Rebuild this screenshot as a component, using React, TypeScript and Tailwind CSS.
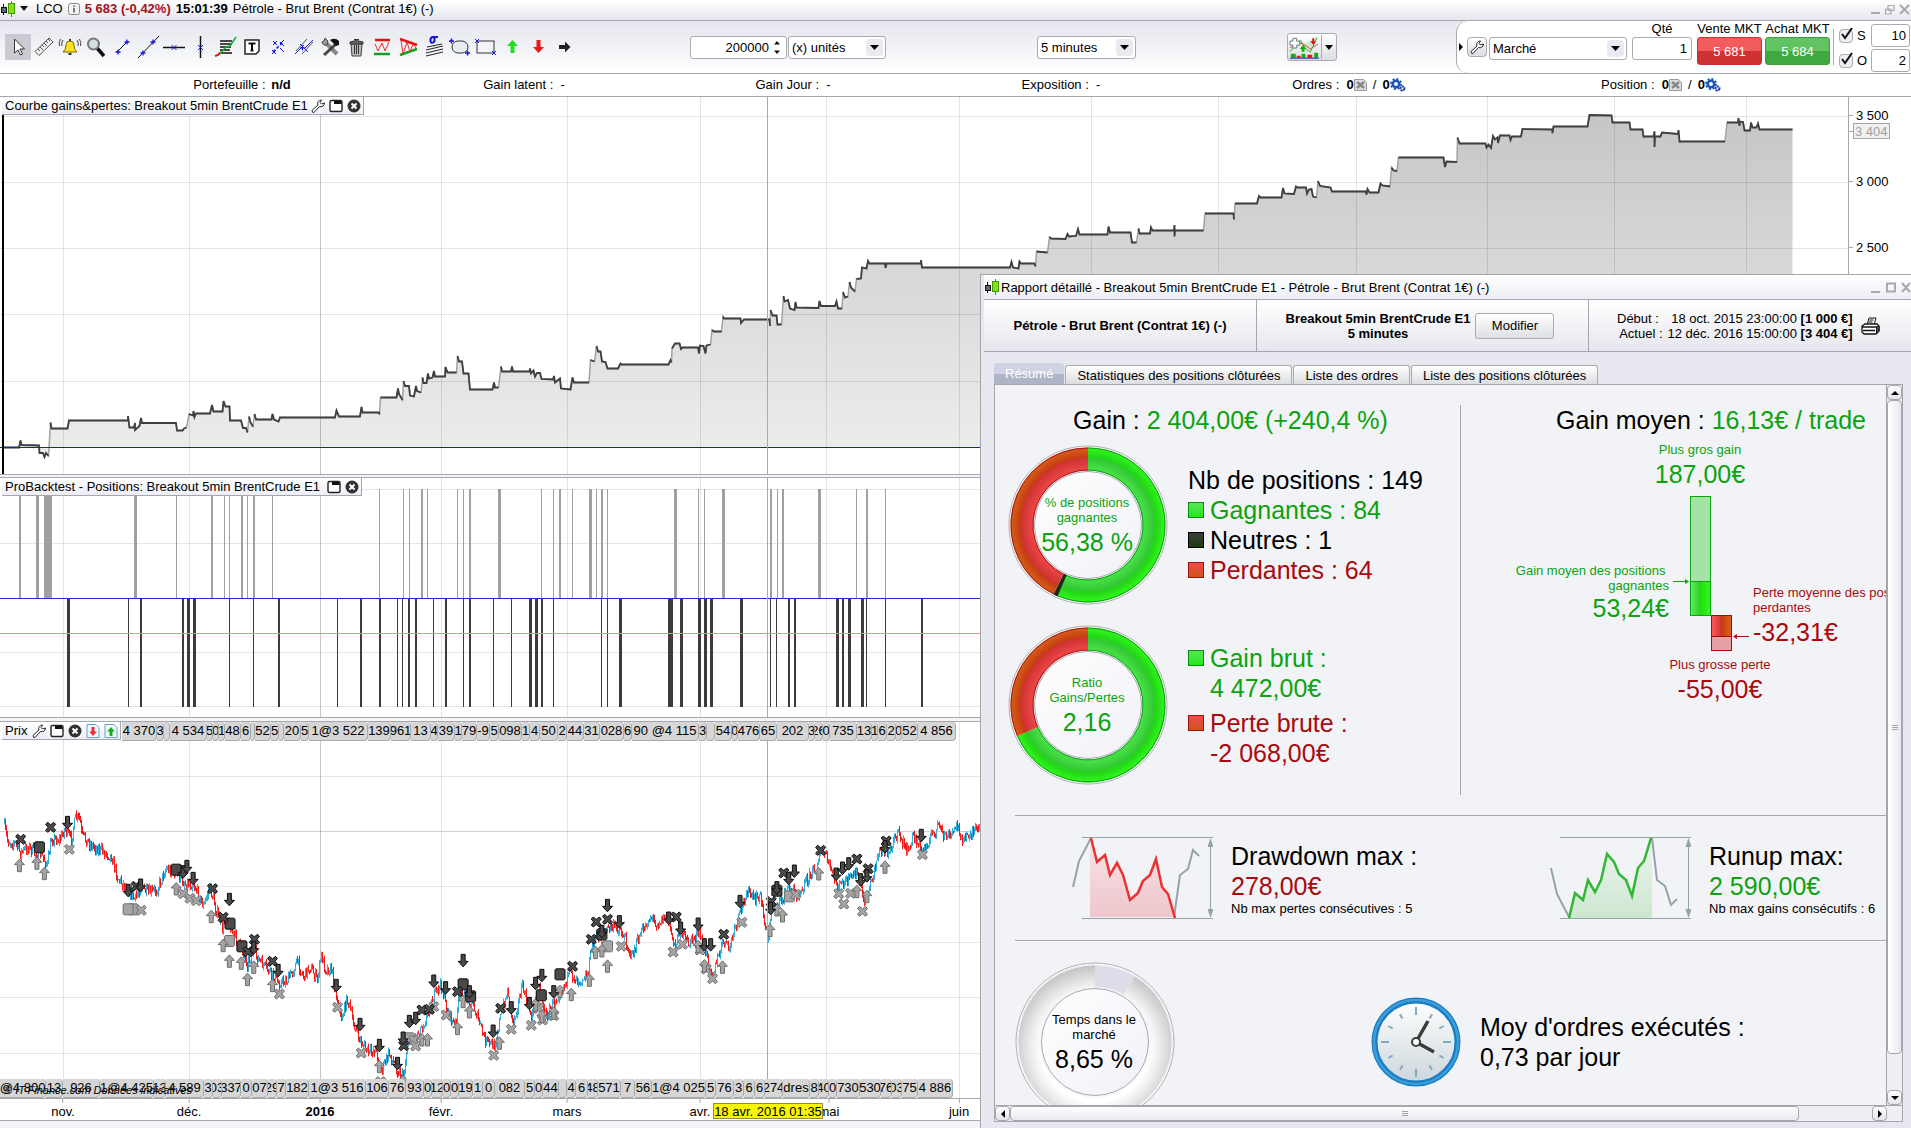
import { ReactNode } from 'react';

type Point = [number, number];
type Bar = [number, number];

const MONTHS_X = [63, 189, 320, 441, 567, 700, 826, 959, 1091, 1218, 1356, 1487, 1614, 1746];
const CURSOR_X = 767;

const EQUITY: Point[] = [
  [2, 447.5], [19, 447.5], [20.5, 440.5], [21.5, 445], [39, 445.5], [39.5, 453], [43, 453], [44.5, 457], [46, 453], [48.5, 456],
  [50.5, 422.5], [51.5, 428.5], [67.5, 428.5], [69, 420.5], [128, 420.5], [128, 416], [129.5, 427.5], [134, 427.5], [135, 423],
  [135, 430], [139.5, 426], [141, 418], [142, 423], [176, 423], [177, 430.5], [182.5, 430.5], [184, 428.5], [186.5, 427.5],
  [189, 414], [193, 415.5], [193.5, 411], [194.5, 417], [196, 413.5], [210, 413.5], [212, 405], [213.5, 411.5], [222.5, 411.5],
  [223.5, 401], [225.5, 406.5], [229.5, 406.5], [230, 420.5], [241, 420.5], [243, 428], [246, 428], [247.5, 432.5], [249, 416.5],
  [250.5, 422.5], [253, 426.5], [254.5, 414], [256, 419.5], [271.5, 419.5], [272.5, 414], [274, 419.5], [278.5, 421.5], [280, 417.5],
  [335, 417.5], [336.5, 410.5], [339, 416.5], [360, 416.5], [361.5, 407], [362.5, 412.5], [379, 412.5], [379.5, 414.5], [380.5, 397.5],
  [396.5, 397.5], [398, 388.5], [399, 394], [402.5, 400], [403.5, 381], [405, 386], [409, 386], [410, 395.5], [414, 396.5], [416, 386],
  [417, 391], [421, 392.5], [422.5, 377.5], [423.5, 383], [426.5, 383], [428, 373.5], [429, 378.5], [432.5, 377.5], [434, 371],
  [435, 376.5], [445, 376.5], [445.5, 367], [447.5, 372.5], [456.5, 372.5], [457.5, 356], [459, 361.5], [462, 361.5], [463.5, 373.5],
  [468.5, 373.5], [470, 389.5], [492.5, 389.5], [494, 382.5], [495, 387.5], [498.5, 387.5], [501, 366.5], [502, 371.5], [511, 371.5],
  [512, 366.5], [513, 371.5], [529.5, 371.5], [530, 368.5], [531, 373.5], [533.5, 370.5], [535, 376.5], [537, 373], [540, 373],
  [541.5, 379], [553, 379.5], [554, 376], [555, 382.5], [560, 378.5], [561, 388.5], [570.5, 389.5], [572.5, 377.5], [574, 382.5],
  [589, 382.5], [590.5, 360], [594.5, 361.5], [596.5, 346], [598, 351.5], [600.5, 351.5], [602, 361.5], [605.5, 362], [607.5, 368.5],
  [618, 368.5], [620.5, 363.5], [621.5, 364.5], [668.5, 364.5], [670.5, 360], [671.5, 362.5], [672, 348.5], [675, 343.5],
  [679.5, 343.5], [681, 349], [682.5, 347.5], [698, 347.5], [699, 353.5], [700, 345.5], [703.5, 346], [705.5, 353.5], [706.5, 345.5],
  [710.5, 344.5], [712, 330], [714, 331.5], [721.5, 331.5], [723, 316.5], [724, 318.5], [740.5, 318.5], [741, 323], [744, 319.5],
  [769.5, 319.5], [770, 326], [770.5, 310], [772.5, 315.5], [776.5, 315.5], [777.5, 324.5], [781.5, 324.5], [783.5, 296],
  [784.5, 301.5], [788, 300], [790, 308.5], [794.5, 310], [795.5, 302], [796.5, 307.5], [818.5, 308], [819.5, 301], [821, 306],
  [835, 306], [836.5, 301.5], [838, 308.5], [842, 308.5], [843, 292], [845, 297.5], [848, 296.5], [849.5, 282], [851, 287.5],
  [855, 291.5], [856.5, 279], [861, 278.5], [862, 267.5], [866.5, 268.5], [868, 261], [869.5, 263.5], [885, 263.5], [885.5, 268],
  [886.5, 263.5], [921, 263.5], [921, 260], [922, 267.5], [1010, 267.5], [1011.5, 262], [1013, 267.5], [1018.5, 268.5],
  [1019.5, 261.5], [1021, 263.5], [1034.5, 263.5], [1035.5, 266.5], [1036.5, 251.5], [1047.5, 252.5], [1049.5, 237], [1051, 238.5],
  [1065.5, 239], [1067.5, 234], [1069, 236.5], [1076, 236], [1078, 229], [1079.5, 234.5], [1107.5, 234.5], [1108.5, 226.5],
  [1110, 232.5], [1130.5, 232.5], [1132, 242.5], [1136.5, 242.5], [1138.5, 228.5], [1139.5, 233.5], [1150, 233.5], [1151, 227.5],
  [1152.5, 230.5], [1174, 230.5], [1174.5, 225], [1174.5, 236.5], [1175, 230.5], [1203.5, 230.5], [1205, 213.5], [1233.5, 213.5],
  [1234, 219.5], [1235, 203.5], [1257, 203.5], [1259, 196], [1260.5, 197.5], [1281.5, 197.5], [1283, 188], [1284.5, 193.5],
  [1294, 194], [1296, 186.5], [1297.5, 187.5], [1306, 187.5], [1307, 193.5], [1309, 189.5], [1311.5, 189], [1313, 196.5],
  [1316.5, 197.5], [1318, 181], [1320, 186], [1330.5, 187.5], [1332, 191.5], [1365.5, 191.5], [1366.5, 194.5], [1367.5, 189],
  [1369.5, 192.5], [1378.5, 192.5], [1380.5, 183.5], [1382.5, 185.5], [1390, 186.5], [1391.5, 167.5], [1393.5, 170.5], [1397, 171],
  [1398.5, 157.5], [1443.5, 157.5], [1445, 167], [1446.5, 161.5], [1457, 162], [1457.5, 137.5], [1459.5, 143.5], [1485.5, 143.5],
  [1486.5, 147.5], [1488.5, 144.5], [1491, 148], [1493, 136], [1495, 139.5], [1497.5, 137.5], [1498, 143], [1500, 135.5],
  [1509.5, 135.5], [1510.5, 140], [1512, 136.5], [1521, 136.5], [1522.5, 129], [1552, 129.5], [1552.5, 133], [1553.5, 126.5],
  [1587.5, 126.5], [1589.5, 115], [1611.5, 115.5], [1612.5, 122.5], [1629.5, 122.5], [1630.5, 129.5], [1642.5, 129.5],
  [1643.5, 136.5], [1653.5, 136.5], [1654.5, 131.5], [1654.5, 147], [1655, 136.5], [1660.5, 136.5], [1662, 132.5], [1678, 134],
  [1678.5, 130], [1679.5, 141.5], [1725, 141.5], [1727, 122.5], [1738, 122.5], [1738.5, 118], [1739.5, 126], [1740, 121.5],
  [1743, 122], [1744.5, 130.5], [1750, 130.5], [1751, 122.5], [1752.5, 127.5], [1756.5, 127.5], [1758, 123.5], [1759.5, 129.5],
  [1792.5, 129.5],
];

// [x, width]
const LONGS: Bar[] = [
  [19, 2], [36, 3], [44, 8], [134, 3], [176, 1], [211, 2], [224, 1], [229, 1], [241, 2], [247, 1], [253, 2], [272, 1], [379, 1],
  [403, 1], [409, 1], [421, 2], [427, 1], [457, 1], [463, 1], [469, 2], [498, 3], [541, 1], [553, 1], [559, 2], [572, 1], [589, 3],
  [596, 1], [601, 2], [607, 1], [674, 3], [698, 1], [704, 1], [722, 3], [770, 2], [777, 1], [782, 2], [818, 3], [856, 1], [866, 2],
  [885, 1],
];
const SHORTS: Bar[] = [
  [67, 3], [128, 1], [140, 2], [182, 2], [187, 3], [193, 3], [229, 1], [253, 1], [278, 2], [337, 1], [360, 2], [379, 2], [397, 1],
  [402, 1], [408, 2], [415, 2], [433, 1], [445, 2], [463, 1], [469, 2], [493, 1], [511, 1], [529, 3], [535, 3], [541, 2], [553, 1],
  [601, 1], [607, 1], [619, 3], [668, 5], [680, 3], [698, 3], [704, 3], [710, 3], [740, 3], [770, 1], [776, 1], [788, 2], [794, 2],
  [836, 3], [842, 2], [848, 3], [861, 3], [866, 1], [885, 1], [921, 2],
];

// price series, in chart units (see toX / toY)
const PRICE: Point[] = [
  [5, 310], [12, 365], [25, 370], [32, 400], [45, 380], [55, 400], [64, 400], [75, 435], [82, 355], [95, 360], [103, 325], [113, 360],
  [120, 295], [127, 295], [130, 345], [145, 375], [165, 395], [178, 410], [188, 475], [205, 510], [215, 540], [225, 500], [235, 520],
  [250, 510], [265, 445], [280, 460], [295, 490], [310, 495], [325, 560], [335, 500], [345, 570], [355, 625], [362, 590], [372, 640],
  [385, 680], [395, 730], [405, 690], [415, 725], [430, 755], [445, 790], [460, 780], [475, 725], [485, 770], [495, 740], [507, 780],
  [513, 705], [520, 745], [530, 750], [545, 900], [555, 835], [565, 910], [575, 960], [590, 1000], [600, 985], [610, 1050],
  [622, 1000], [635, 1050], [645, 1072], [652, 960], [665, 950], [680, 900], [693, 830], [705, 795], [715, 870], [727, 920],
  [735, 820], [745, 830], [755, 850], [765, 900], [775, 960], [790, 980], [800, 890], [812, 810], [820, 910], [835, 800], [850, 890],
  [862, 800], [873, 890], [885, 850], [900, 800], [912, 760], [925, 780], [940, 760], [948, 660], [962, 650], [975, 620], [990, 625],
  [1000, 660], [1010, 710], [1025, 640], [1040, 590], [1050, 610], [1065, 590], [1080, 680], [1087, 630], [1100, 670], [1118, 640],
  [1130, 710], [1140, 760], [1158, 660], [1165, 690], [1180, 600], [1195, 510], [1207, 545], [1215, 520], [1228, 660], [1235, 560],
  [1250, 540], [1262, 500], [1275, 525], [1290, 480], [1305, 440], [1315, 390], [1325, 430], [1340, 500], [1358, 480], [1370, 455],
  [1383, 550], [1395, 470], [1405, 400], [1420, 390], [1437, 340], [1453, 400], [1460, 345], [1475, 395], [1490, 350], [1500, 315],
  [1508, 345], [1520, 350], [1532, 310], [1540, 370], [1550, 340], [1575, 325],
];

const EXIT_SHORT: Point[] = [
  [111, 388], [226, 571], [293, 521], [304, 535], [314, 542], [447, 822], [540, 862], [578, 999], [609, 1085], [662, 960], [665, 978],
  [694, 860], [714, 885], [790, 1006], [818, 928], [850, 916], [862, 865], [868, 900], [886, 887], [994, 679], [1077, 696],
  [1092, 673], [1120, 690], [1130, 747], [1140, 776], [1187, 607], [1273, 523], [1342, 521], [1350, 552], [1361, 520], [1380, 574],
  [1476, 404],
];
const EXIT_LONG: Point[] = [
  [33, 358], [81, 322], [218, 499], [340, 506], [357, 592], [397, 695], [407, 658], [436, 724], [646, 977], [675, 870], [687, 868],
  [732, 815], [801, 865], [916, 739], [946, 658], [954, 606], [972, 598], [1082, 591], [1158, 643], [1234, 545], [1254, 459],
  [1313, 391], [1371, 417], [1389, 446], [1418, 363],
];
const SELLS: Point[] = [
  [108, 307], [205, 511], [225, 495], [293, 455], [299, 439], [309, 475], [367, 538], [406, 683], [445, 751], [538, 796], [576, 913],
  [607, 976], [636, 1030], [645, 954], [655, 904], [665, 895], [694, 783], [713, 803], [741, 721], [751, 815], [789, 933], [818, 863],
  [847, 850], [857, 790], [867, 766], [886, 815], [963, 634], [972, 556], [991, 605], [1070, 594], [1089, 624], [1117, 612],
  [1127, 674], [1137, 674], [1184, 544], [1233, 565], [1243, 503], [1262, 475], [1271, 453], [1338, 462], [1348, 444], [1358, 431],
  [1377, 479], [1387, 467], [1416, 380], [1474, 346],
];
const BUYS: Point[] = [
  [31, 437], [59, 430], [71, 461], [282, 507], [338, 590], [357, 677], [367, 724], [386, 730], [396, 779], [406, 742], [436, 797],
  [607, 1040], [645, 1085], [675, 960], [684, 960], [732, 926], [741, 845], [751, 876], [799, 970], [857, 855], [867, 890],
  [886, 880], [896, 815], [914, 824], [943, 781], [953, 698], [963, 693], [972, 739], [1117, 680], [1127, 738], [1156, 742],
  [1232, 632], [1243, 570], [1252, 588], [1310, 462], [1371, 515], [1387, 530], [1416, 442],
];
const DARK_SQUARES: Point[] = [
  [63, 382], [282, 449], [368, 611], [387, 679], [741, 793], [753, 829], [866, 826], [896, 763], [963, 643], [1243, 512],
];
const LIGHT_SQUARES: Point[] = [[213, 568], [205, 568], [367, 663], [655, 955], [972, 679], [1263, 529]];

// [width, label]
const TOP_TAGS: [number, string][] = [
  [35, '4 370'], [7, '3'], [6, ''], [37, '4 534'], [6, '5'], [6, '0'], [6, '1'], [16, '48'], [10, '6'], [4, ''], [16, '52'], [8, '5'],
  [5, ''], [17, '20'], [8, '5'], [59, '1@3 522'], [23, '139'], [20, '961'], [20, '13'], [7, '4'], [17, '39'], [7, '1'], [15, '79'],
  [13, '-9'], [9, '5'], [23, '098'], [8, '1'], [10, '4'], [18, '50'], [9, '2'], [17, '44'], [16, '31'], [24, '028'], [8, '6'],
  [67, '90 @4 115'], [8, '3'], [8, ''], [17, '54'], [6, '0'], [22, '476'], [17, '65'], [32, '202'], [6, '3'], [8, '26'], [7, '0'],
  [27, '735'], [15, '13'], [6, '1'], [9, '6'], [9, '2'], [6, '0'], [16, '52'], [38, '4 856'],
];
const BOTTOM_TAGS: [number, string][] = [
  [46, '@4 800'], [17, '13'], [37, '926'], [54, '1@4 425'], [12, '13'], [38, '4 589'], [9, '3'], [9, '03'], [19, '337'], [11, '0'],
  [16, '07'], [9, '29'], [9, '7'], [23, '182'], [57, '1@3 516'], [23, '106'], [17, '76'], [18, '93'], [8, '0'], [11, '12'],
  [8, '0'], [8, '0'], [14, '19'], [10, '1'], [12, '0'], [30, '082'], [10, '5'], [8, '0'], [16, '44'], [8, ''], [9, '4'], [12, '6'],
  [10, '48'], [23, '571'], [14, '7'], [17, '56'], [54, '1@4 025'], [10, '5'], [18, '76'], [10, '3'], [11, '6'], [10, '6'],
  [18, '274'], [27, 'dres'], [9, '8'], [10, '40'], [8, '0'], [23, '730'], [21, '530'], [11, '76'], [10, '03'], [16, '75'],
  [35, '4 886'],
];

const toX = (t: number) => t * 0.625;
const toY = (p: number) => 720 + p / 3;

const linePath = (points: Point[]) => points.map(([x, y], i) => `${i ? 'L' : 'M'}${x} ${y}`).join('');

// sharp rises stay in the lighter stroke that lies below
const stepPath = (points: Point[]) =>
  points.map(([x, y], i) => `${i === 0 || points[i - 1][1] - y > 12 ? 'M' : 'L'}${x} ${y}`).join('');

const buildCandles = () => {
  let up = '';
  let down = '';
  let seed = 7;
  const rnd = () => {
    seed = (seed * 16807) % 2147483647;
    return seed / 2147483647;
  };
  let k = 0;
  let prev = toY(PRICE[0][1]);
  for (let x = 4; x < 984; x++) {
    while (k < PRICE.length - 2 && toX(PRICE[k + 1][0]) < x) k++;
    const [x0, y0] = PRICE[k];
    const [x1, y1] = PRICE[k + 1];
    const f = Math.min(1, Math.max(0, (x - toX(x0)) / (toX(x1) - toX(x0))));
    const y = toY(y0 + (y1 - y0) * f) + (rnd() - 0.5) * 11;
    const top = Math.min(prev, y) - rnd() * 4;
    const bottom = Math.max(prev, y) + rnd() * 4;
    const seg = `M${x + 0.5} ${top.toFixed(1)}V${bottom.toFixed(1)}`;
    if (y < prev) up += seg;
    else down += seg;
    prev = y;
  }
  return { up, down };
};

const CANDLES = buildCandles();

const Logo = () => (
  <svg className="h-4 w-4 shrink-0" viewBox="0 0 16 16">
    <path d="M3.5 3v11" stroke="#111" />
    <rect x="1.5" y="6.500" width="5" height="5" fill="#5f6b70" stroke="#111" />
    <path d="M11.500 0v16" stroke="#3c9a00" />
    <rect x="8.500" y="2.500" width="6" height="10" fill="#86e010" stroke="#3c9a00" />
  </svg>
);

const Wrench = () => (
  <svg className="h-4 w-4 shrink-0" viewBox="0 0 16 16" fill="#fff" stroke="#222" strokeLinejoin="round">
    <path d="M2 12.500 8 7C7 4.500 8.500 2 11.500 2L10 4.500l1.500 1.500L14.500 5C14.500 8 12 9.300 9.500 8.500L4 14.500Q2.200 15 2 12.500Z" />
  </svg>
);

const WindowIcon = () => (
  <svg className="h-4 w-4 shrink-0" viewBox="0 0 16 16">
    <rect x="2" y="2.500" width="12" height="11" rx="1.500" fill="#fff" stroke="#222" strokeWidth="1.400" />
    <path d="M6 3h7.500v3H6z" fill="#111" />
  </svg>
);

const CloseIcon = () => (
  <svg className="h-4 w-4 shrink-0" viewBox="0 0 16 16">
    <circle cx="8" cy="8" r="6.500" fill="#333" />
    <path d="m5.500 5.500 5 5m0-5-5 5" stroke="#fff" strokeWidth="2" />
  </svg>
);

const PageArrow = ({ up }: { up?: boolean }) => (
  <svg className="h-4 w-4 shrink-0" viewBox="0 0 16 16">
    <path d="M2 1.500h9l3 3v10H2z" fill="#f4f9ff" stroke="#6a9fd0" />
    {up ? (
      <path d="M8 4l4 4.500H9.500V13h-3V8.500H4z" fill="#12b212" />
    ) : (
      <path d="M8 13l4-4.500H9.500V4h-3v4.500H4z" fill="#e43232" />
    )}
  </svg>
);

const Tool = ({ label, active, children }: { label: string; active?: boolean; children: ReactNode }) => (
  <button type="button" aria-label={label} className={active ? 'h-[26px] w-[26px] bg-[#c9cad2]' : 'h-[26px] w-[26px]'}>
    <svg className="h-[26px] w-[26px]" viewBox="0 0 26 26" fill="none">
      {children}
    </svg>
  </button>
);

const Toolbox = () => (
  <div className="flex shrink-0">
    <Tool label="Curseur" active>
      <path d="M9.500 5v14l3.500-3 2.500 5 2-1-2.500-5h4.500z" fill="#fff" stroke="#333" />
    </Tool>
    <Tool label="Règle">
      <path d="M4 17.500 18 4l4 4L8 21.500z" fill="#eee" stroke="#555" />
      <path d="m7 15 2 2m0-4 3 3m-1-5 2 2m0-4 3 3m-1-5 2 2m0-4 2 2" stroke="#555" />
    </Tool>
    <Tool label="Alarme">
      <path d="M6 18q3-2 3-7 0-4 4-4t4 4q0 5 3 7z" fill="#ffe21a" stroke="#7a6a00" />
      <path d="M11.500 20h3M13 5v2" stroke="#333" strokeWidth="2" />
      <path d="M6 6q-2 3-1 6M3.500 5q-2 4-1 7M20 6q2 3 1 6m1.500-7q2 4 1 7" stroke="#444" />
    </Tool>
    <Tool label="Zoom">
      <path d="m14 14 7 8" stroke="#111" strokeWidth="3.500" />
      <circle cx="10.500" cy="10" r="5.500" fill="#d5dde2" stroke="#777" strokeWidth="2" />
    </Tool>
    <Tool label="Segment">
      <path d="M9 17 18 8" stroke="#111" />
      <path d="M6.500 18h5M9 15.500v5M15.500 8h5m-2.500-2.500v5" stroke="#1414e6" strokeWidth="1.300" />
    </Tool>
    <Tool label="Droite">
      <path d="M3 24 24 2" stroke="#111" />
      <path d="M5.500 19h5m-2.500-2.500v5M15.500 8h5m-2.500-2.500v5" stroke="#1414e6" strokeWidth="1.300" />
    </Tool>
    <Tool label="Horizontale">
      <path d="M2 13.500h22" stroke="#111" strokeWidth="1.500" />
      <path d="m10.500 11 5 5m0-5-5 5" stroke="#1414e6" />
    </Tool>
    <Tool label="Verticale">
      <path d="M13.500 2v22" stroke="#111" strokeWidth="1.500" />
      <path d="m11 11 5 5m0-5-5 5" stroke="#1414e6" />
    </Tool>
    <Tool label="Fibonacci">
      <path d="M7 7h12M7 10h12M7 13h11M7 16h10M7 19h12" stroke="#111" strokeWidth="1.500" />
      <path d="m2 22 3-1 3-3" stroke="#e81010" strokeWidth="2" />
      <path d="m7 20 6-7 4-1 6-9" stroke="#10b030" strokeWidth="1.500" />
    </Tool>
    <Tool label="Texte">
      <path d="M6 6h14v11l-3 3H6z" fill="#fff" stroke="#222" strokeWidth="1.500" />
      <path d="M9.500 9.500h7m-3.500 0v7m-1.500 0h3" stroke="#111" strokeWidth="2" />
    </Tool>
    <Tool label="Copie">
      <path d="M8 18 18 8" stroke="#1414e6" strokeDasharray="3 2" strokeWidth="1.500" />
      <path d="m7 16 4 4m-4 0 4-4m4-8 4 4m0-6-4 4m-7-3 4 4m-4 0 4-4m3 7 4 4" stroke="#1414e6" />
    </Tool>
    <Tool label="Parallèles">
      <path d="M5 17 16 5M11 20 22 8" stroke="#555" />
      <path d="M4 20 13 11M13 15 22 6M9 10l8 8M9 14h5m-2.500-2.500v5" stroke="#1414e6" />
    </Tool>
    <Tool label="Outils">
      <path d="m8 8 12 12" stroke="#888" strokeWidth="4" />
      <path d="M19 10 7 21" stroke="#444" strokeWidth="3" />
      <path d="M13 6q5-3 9 1v4l-3 1z" fill="#111" />
      <path d="M5 8q1 4 5 3l1-4-3-3-1 3z" fill="#999" stroke="#444" />
    </Tool>
    <Tool label="Corbeille">
      <path d="M8 10h11l-1 12H9z" fill="#bbb" stroke="#444" />
      <path d="M7 8q6-3 13 0v2H7z" fill="#666" stroke="#333" />
      <path d="M11.500 11v9m2-9v9m2-9v9M11 5.500h5" stroke="#333" />
    </Tool>
    <Tool label="Canal">
      <path d="M6 6h15" stroke="#e81010" strokeWidth="2.500" />
      <path d="M5 20h16" stroke="#10a020" strokeWidth="2.500" />
      <path d="m6 10 3 7 4-8 3 8 4-9" stroke="#e83030" />
    </Tool>
    <Tool label="Triangle">
      <path d="m5 5 17 6" stroke="#e81010" strokeWidth="2.500" />
      <path d="m5 21 17-6" stroke="#10a020" strokeWidth="2.500" />
      <path d="m6 6 2 14 4-12 3 10 3-8 3 4" stroke="#e83030" />
    </Tool>
    <Tool label="Écart type">
      <path d="m5 16 17-4M5 19l17-4M5 22l17-4M6 13l15-3" stroke="#222" />
      <path d="M17 3h-5.500q-2.500 1-2 4t3.500 1q1.500-3-.500-5" stroke="#1414e6" strokeWidth="2" />
    </Tool>
    <Tool label="Ellipse">
      <rect x="5" y="7" width="16" height="12" rx="6" fill="#e9ecf2" stroke="#333" />
      <path d="M2 7h5M4.500 4.500v5M18 19h5m-2.500-2.500v5" stroke="#1414e6" strokeWidth="1.500" />
    </Tool>
    <Tool label="Rectangle">
      <rect x="4" y="7" width="17" height="12" fill="#f4f5f8" stroke="#333" />
      <path d="m2 5 4 4m0-4-4 4m17 8 4 4m0-4-4 4" stroke="#1414e6" />
    </Tool>
    <Tool label="Flèche haut">
      <path d="m13.500 6 5.500 6h-3.500v7h-4v-7H8z" fill="#22dd22" />
    </Tool>
    <Tool label="Flèche bas">
      <path d="M13.500 19 19 13h-3.500V6h-4v7H8z" fill="#f01818" />
    </Tool>
    <Tool label="Flèche droite">
      <path d="M19.500 13 14 7.500V11H8v4h6v3.500z" fill="#222" />
    </Tool>
  </div>
);

const DropDown = ({ id, label, value, className }: { id: string; label: string; value: string; className: string }) => (
  <div className={`relative h-[23px] ${className}`}>
    <select
      id={id}
      aria-label={label}
      defaultValue={value}
      className="h-full w-full appearance-none rounded-[3px] border border-[#a9aab2] bg-white pl-[3px] leading-[15px] outline-none"
    >
      <option>{value}</option>
    </select>
    <span className="pointer-events-none absolute top-[3px] right-[3px] flex h-[17px] w-[17px] items-center justify-center rounded-sm bg-[#e8e9f1]">
      <svg className="h-[5px] w-[9px]" viewBox="0 0 9 5">
        <path d="M0 0h9L4.500 5z" fill="#000" />
      </svg>
    </span>
  </div>
);

const TitleBar = () => (
  <header className="flex h-[21px] items-center border-b border-[#a6a7ae] bg-linear-to-b from-white to-[#e6e7ee] pb-[3px]">
    <Logo />
    <svg className="mx-1 h-[5px] w-2" viewBox="0 0 8 5">
      <path d="M0 0h8L4 5z" fill="#111" />
    </svg>
    <div className="flex items-center gap-[5px] pl-1 whitespace-nowrap">
      <span>LCO</span>
      <svg className="h-3 w-3" viewBox="0 0 12 12">
        <rect x=".5" y=".5" width="11" height="11" rx="2" fill="#f3f3f3" stroke="#888" />
        <path d="M6 2.500v1.500M6 5v4.500" stroke="#555" strokeWidth="1.500" />
      </svg>
      <b className="text-[#a5121a]">5 683 (-0,42%)</b>
      <b>15:01:39</b>
      <span>Pétrole - Brut Brent (Contrat 1€) (-)</span>
    </div>
    <svg className="ml-auto h-4 w-10" viewBox="0 0 40 16" stroke="#a9aaae" strokeWidth="2" fill="none">
      <path d="M0 12h9M29 4l9 9m0-9-9 9" />
      <path d="M17 4.500h6v5h-6zM14.500 8h5.500v5h-5.500z" strokeWidth="1.200" />
    </svg>
  </header>
);

const OrderEntry = () => (
  <div className="flex h-full w-[455px] shrink-0 items-start rounded-l-xl border-l border-[#a9aab2] bg-white pl-[2px]">
    <svg className="mt-[22px] h-2 w-1 shrink-0" viewBox="0 0 4 8">
      <path d="M0 0v8l4-4z" />
    </svg>
    <button
      type="button"
      aria-label="Réglages"
      className="mt-4 ml-1 flex h-5 w-5 items-center justify-center rounded-sm border border-[#a9aab2] bg-linear-to-b from-white to-[#dcdde2]"
    >
      <Wrench />
    </button>
    <DropDown id="ordre" label="Type d'ordre" value="Marché" className="mt-4 ml-[2px] w-[138px]" />
    <div className="ml-[5px] flex w-[60px] flex-col items-center">
      <label htmlFor="qte" className="h-4 leading-[15px]">
        Qté
      </label>
      <input id="qte" defaultValue="1" className="h-[23px] w-full rounded-[3px] border border-[#a9aab2] bg-white px-1 text-right" />
    </div>
    <div className="ml-[5px] flex w-[65px] flex-col items-center whitespace-nowrap">
      <span className="h-4 leading-[15px]">Vente MKT</span>
      <button
        type="button"
        className="h-7 w-full rounded-[3px] border border-[#c83232] bg-linear-to-b from-[#f25c5c] from-50% to-[#cf3232] to-50% text-white"
      >
        5 681
      </button>
    </div>
    <div className="ml-[3px] flex w-[65px] flex-col items-center whitespace-nowrap">
      <span className="h-4 leading-[15px]">Achat MKT</span>
      <button
        type="button"
        className="h-7 w-full rounded-[3px] border border-[#3a9e3a] bg-linear-to-b from-[#62c362] from-50% to-[#40a840] to-50% text-white"
      >
        5 684
      </button>
    </div>
    <div className="mt-2 ml-[3px] h-9 border-l border-[#a9aab2]" />
    <div className="ml-[5px] flex flex-col gap-[2px] pt-[3px]">
      {[
        ['S', '10'],
        ['O', '2'],
      ].map(([name, value]) => (
        <div key={name} className="flex h-[23px] items-center">
          <span className="relative h-[14px] w-[14px]">
            <input
              id={`chk-${name}`}
              type="checkbox"
              defaultChecked
              className="block h-[14px] w-[14px] appearance-none rounded-sm border border-[#a9aab2] bg-[#eeeef2]"
            />
            <svg className="pointer-events-none absolute -top-1 left-0 h-4 w-4" viewBox="0 0 16 16" fill="none">
              <path d="m3 9 3 4 7-10" stroke="#111" strokeWidth="2" />
            </svg>
          </span>
          <label htmlFor={`chk-${name}`} className="w-[18px] pl-1">
            {name}
          </label>
          <input
            aria-label={name}
            defaultValue={value}
            className="h-[23px] w-[39px] rounded-[3px] border border-[#a9aab2] bg-white px-[3px] text-right"
          />
        </div>
      ))}
    </div>
  </div>
);

const Toolbar = () => (
  <div className="flex h-[53px] items-center border-b border-[#a6a7ae] bg-linear-to-b from-[#e5e6ee] to-white pl-[5px]">
    <Toolbox />
    <div className="ml-[113px] flex shrink-0 gap-px">
      <div className="relative h-[23px] w-[97px]">
        <input
          aria-label="Nombre d'unités"
          defaultValue="200000"
          className="h-full w-full rounded-[3px] border border-[#a9aab2] bg-white pr-[17px] text-right"
        />
        <svg className="absolute top-1 right-[6px] h-[15px] w-2" viewBox="0 0 8 15">
          <path d="M1 4.500h6L4 1zM1 10.500h6L4 14z" fill="#111" />
        </svg>
      </div>
      <DropDown id="unites" label="Unités" value="(x) unités" className="w-[98px]" />
    </div>
    <DropDown id="periode" label="Période" value="5 minutes" className="ml-[151px] w-[99px] shrink-0" />
    <button
      type="button"
      aria-label="Indicateurs"
      className="ml-[151px] flex h-7 w-[50px] shrink-0 items-center rounded-[3px] border border-[#a9aab2] bg-linear-to-b from-white to-[#dcdde2]"
    >
      <svg className="h-6 w-[34px] border-r border-[#a9aab2]" viewBox="0 0 34 24" fill="none">
        <path d="M2 17 9 8l4-3 5 9 5 3 4-8 3-7" fill="#cfe8cf" stroke="#4a4" />
        <path d="m2 13 8-6 6 2 7 5 8-5" stroke="#e04040" />
        <path d="M5 3h4v3h3v4H9v3H5v-3H2V6h3z" fill="#fff" stroke="#678" />
        <path d="M14 17v-3h-2l3.500-4 3.500 4h-2v3z" fill="#10b010" />
        <path d="M25 3v3h-2l3 4 3-4h-2V3z" fill="#e81010" />
        <path d="M3 19h5v4H3zm11 0h4v4h-4zm13-1h4v5h-4z" fill="#10b010" />
        <path d="M9 21h4v2H9zm11-1h5v3h-5z" fill="#e81010" />
        <path d="M2 23.500h30" stroke="#1414c0" />
      </svg>
      <svg className="mx-auto h-[5px] w-2" viewBox="0 0 8 5">
        <path d="M0 0h8L4 5z" />
      </svg>
    </button>
    <div className="ml-auto h-full">
      <OrderEntry />
    </div>
  </div>
);

const Counter = () => (
  <>
    <b>0</b>
    <svg className="h-[13px] w-[13px]" viewBox="0 0 13 13">
      <path d="M.5 1.500h9l3 3v8H.5z" fill="#ddd" stroke="#999" />
      <path d="m3 4 7 6m0-6-7 6" stroke="#888" strokeWidth="2.500" />
    </svg>
    <span className="px-[6px]">/</span>
    <b>0</b>
    <svg className="h-[14px] w-4" viewBox="0 0 16 14" fill="none">
      <circle cx="6" cy="6" r="3.200" stroke="#1b55b8" strokeWidth="2.500" />
      <circle cx="6" cy="6" r="5" stroke="#1b55b8" strokeWidth="2" strokeDasharray="2 1.900" />
      <circle cx="12.500" cy="10.500" r="2" stroke="#1b3fa0" strokeWidth="2" strokeDasharray="2 .6" />
    </svg>
  </>
);

const StatusBar = () => (
  <div className="grid h-[23px] grid-cols-[282fr_282fr_256fr_280fr_296fr_328fr] items-center justify-items-center border-b border-[#a6a7ae] bg-white pr-[86px] pb-px pl-[101px]">
    <span>
      Portefeuille : <b className="pl-[2px]">n/d</b>
    </span>
    <span>Gain latent : &nbsp;-</span>
    <span>Gain Jour : &nbsp;-</span>
    <span>Exposition : &nbsp;-</span>
    <span className="flex items-center">
      Ordres : &nbsp;
      <Counter />
    </span>
    <span className="flex items-center">
      Position : &nbsp;
      <Counter />
    </span>
  </div>
);

const ChartTitle = ({ children }: { children: ReactNode }) => (
  <div className="absolute top-0 left-[2px] flex h-[18px] items-center gap-[2px] border-r border-b border-[#a6a7ae] bg-linear-to-b from-white to-[#eceef4] pr-px pl-[3px] whitespace-nowrap">
    {children}
  </div>
);

const Grid = ({ rows, top, bottom }: { rows: number[]; top: number; bottom: number }) => (
  <g stroke="#000" strokeOpacity=".1">
    {rows.map((y) => (
      <path key={y} d={`M0 ${y + 0.5}H1848`} strokeOpacity={y === 831 ? 0.18 : 0.1} />
    ))}
    {MONTHS_X.map((x) => (
      <path key={x} d={`M${x + 0.5} ${top}V${bottom}`} strokeOpacity={x === 320 ? 0.22 : 0.1} />
    ))}
  </g>
);

const AxisLabel = ({ children }: { children: ReactNode }) => (
  <div className="flex h-[15px] items-center gap-[3px] whitespace-nowrap">
    <span className="h-px w-1 bg-[#a6a7ae]" />
    {children}
  </div>
);

const EquityChart = () => (
  <section className="relative flex h-[378px] shrink-0 border-b border-[#a6a7ae] bg-white">
    <svg className="h-[377px] min-w-0 flex-1" viewBox="0 97 1848 377" preserveAspectRatio="none" fill="none">
      <defs>
        <linearGradient id="equity" gradientUnits="userSpaceOnUse" x1="0" y1="115" x2="0" y2="447">
          <stop offset="0" stopColor="#c6c6c6" />
          <stop offset="1" stopColor="#ececec" />
        </linearGradient>
      </defs>
      <path d={`${linePath(EQUITY)}V447.500H2Z`} fill="url(#equity)" />
      <Grid rows={[116, 182, 248, 314, 381]} top={97} bottom={474} />
      <path d={linePath(EQUITY)} stroke="#a2a2a2" strokeWidth="1.500" />
      <path d={stepPath(EQUITY)} stroke="#404040" strokeWidth="1.800" />
      <path d="M0 447.500H1848" stroke="#1f1fae" />
      <path d="M3 115V474" stroke="#000" strokeWidth="2" />
      <path d={`M${CURSOR_X + 0.5} 97V474`} stroke="#f08c8c" />
    </svg>
    <div className="w-[63px] shrink-0 border-l border-[#a6a7ae] pt-[11px]">
      <AxisLabel>3 500</AxisLabel>
      <div className="flex h-4 items-center">
        <span className="h-px w-1 bg-[#a6a7ae]" />
        <span className="h-4 border border-[#a6a7ae] bg-[#f0f0f0] px-px leading-[15px] whitespace-nowrap text-[#a0a0a0]">3 404</span>
      </div>
      <div className="pt-[35px]">
        <AxisLabel>3 000</AxisLabel>
      </div>
      <div className="pt-[51px]">
        <AxisLabel>2 500</AxisLabel>
      </div>
    </div>
    <ChartTitle>
      <span>Courbe gains&amp;pertes: Breakout 5min BrentCrude E1</span>
      <Wrench />
      <WindowIcon />
      <CloseIcon />
    </ChartTitle>
  </section>
);

const PositionsChart = () => (
  <section className="relative mt-[2px] h-[241px] shrink-0 border-y border-[#a6a7ae] bg-white pr-[63px]">
    <svg className="h-[239px] w-full" viewBox="0 478 1848 239" preserveAspectRatio="none" fill="none">
      <Grid rows={[489, 543, 652, 706]} top={478} bottom={717} />
      {LONGS.map(([x, w]) => (
        <rect key={x} x={x} y="489" width={w} height="109" fill="#a0a0a0" />
      ))}
      {SHORTS.map(([x, w]) => (
        <rect key={x} x={x} y="598" width={w} height="109" fill="#3c3c3c" />
      ))}
      <path d="M0 598.500H1848" stroke="#2a2ac8" />
      <path d={`M0 633.500H1848M${CURSOR_X + 0.5} 478V717`} stroke="#f08c8c" />
    </svg>
    <ChartTitle>
      <span className="pr-1">ProBacktest - Positions: Breakout 5min BrentCrude E1</span>
      <WindowIcon />
      <CloseIcon />
    </ChartTitle>
  </section>
);

const CROSS = 'M-5-3-3-5 0-2.500 3-5 5-3 2.500 0 5 3 3 5 0 2.500-3 5-5 3-2.500 0Z';
const ARROW_DOWN = 'M-2-6H2V1H5L0 6.500-5 1H-2Z';
const ARROW_UP = 'M-2 6H2V-1H5L0-6.500-5-1H-2Z';
const SQUARE = 'M-4-5.500H4L5-4.500V4.500L4 5.500H-4L-5 4.500V-4.500Z';

const Markers = ({ at, d, dark }: { at: Point[]; d: string; dark?: boolean }) => (
  <g fill={dark ? '#4a4a4a' : '#a4a4a4'} stroke={dark ? '#0c0c0c' : '#6e6e6e'}>
    {at.map(([t, p]) => (
      <path key={`${t}-${p}`} d={d} transform={`translate(${toX(t)} ${toY(p)})`} />
    ))}
  </g>
);

const TagRow = ({ tags }: { tags: [number, string][] }) => (
  <div className="flex h-[19px]">
    {tags.map(([width, label], i) => (
      <span
        key={i}
        className="flex shrink-0 justify-center overflow-hidden rounded-r-sm border-r border-b border-[#a9a9a9] bg-[#d6d6d6] leading-[18px] whitespace-nowrap"
        style={{ width }}
      >
        {label}
      </span>
    ))}
  </div>
);

const PriceChart = () => (
  <section className="relative mt-[3px] min-h-0 flex-1 border-t border-b border-[#a6a7ae] bg-white pr-[63px]">
    <svg className="h-full w-full" viewBox="0 722 1848 376" preserveAspectRatio="none" fill="none">
      <Grid rows={[776, 831, 886, 942, 997, 1053]} top={722} bottom={1098} />
      <path d={CANDLES.down} stroke="#ee1c1c" />
      <path d={CANDLES.up} stroke="#30acd8" />
      <Markers at={LIGHT_SQUARES} d={SQUARE} />
      <Markers at={EXIT_SHORT} d={CROSS} />
      <Markers at={BUYS} d={ARROW_UP} />
      <Markers at={DARK_SQUARES} d={SQUARE} dark />
      <Markers at={EXIT_LONG} d={CROSS} dark />
      <Markers at={SELLS} d={ARROW_DOWN} dark />
      <path d={`M${CURSOR_X + 0.5} 722V1098`} stroke="#f08c8c" />
    </svg>
    <ChartTitle>
      <span className="pr-[2px]">Prix</span>
      <Wrench />
      <WindowIcon />
      <CloseIcon />
      <PageArrow />
      <PageArrow up />
    </ChartTitle>
    <div className="absolute top-0 left-[122px]">
      <TagRow tags={TOP_TAGS} />
    </div>
    <div className="absolute bottom-0 left-0">
      <TagRow tags={BOTTOM_TAGS} />
    </div>
    <div className="absolute bottom-0 left-1 text-[11px] leading-[15px] whitespace-nowrap italic">© IT-Finance.com Données indicatives</div>
  </section>
);

const AXIS_DATES = [
  { x: 63, label: 'nov.' },
  { x: 189, label: 'déc.' },
  { x: 320, label: '2016', bold: true },
  { x: 441, label: 'févr.' },
  { x: 567, label: 'mars' },
  { x: 700, label: 'avr.' },
  { x: 829, label: 'mai' },
  { x: 959, label: 'juin' },
];

const TimeAxis = () => (
  <div className="relative h-[22px] shrink-0 border-b border-[#a6a7ae] bg-white">
    {AXIS_DATES.map(({ x, label, bold }) => (
      <span
        key={label}
        className={`absolute top-0 flex -translate-x-1/2 flex-col items-center leading-[15px] ${bold ? 'font-bold' : ''}`}
        style={{ left: x }}
      >
        <i className="mb-px h-1 w-px bg-[#a6a7ae]" />
        {label}
      </span>
    ))}
    <span className="absolute top-1 left-[713px] h-4 w-[110px] border border-[#8c8c3c] bg-[#f6f600] text-center leading-[15px] whitespace-nowrap">
      18 avr. 2016 01:35
    </span>
  </div>
);

type Slice = { share: number; fill: string; edge: string };

const polar = (r: number, share: number) => {
  const a = share * Math.PI * 2 - Math.PI / 2;
  return `${(80 + r * Math.cos(a)).toFixed(2)} ${(80 + r * Math.sin(a)).toFixed(2)}`;
};

const arc = (r: number, from: number, to: number) => `M${polar(r, from)}A${r} ${r} 0 ${to - from > 0.5 ? 1 : 0} 1 ${polar(r, to)}`;

const WIN_SLICE = { fill: 'url(#ring-green)', edge: '#0b9e14' };
const LOSS_SLICE = { fill: 'url(#ring-red)', edge: '#b01414' };
const FLAT_SLICE = { fill: '#1c3010', edge: '#111' };

const Donut = ({ slices, children }: { slices: Slice[]; children: ReactNode }) => {
  let start = 0;
  return (
    <div className="relative h-40 w-40 shrink-0">
      <svg className="h-40 w-40" viewBox="0 0 160 160" fill="none">
        <defs>
          <radialGradient id="ring-green" gradientUnits="userSpaceOnUse" cx="80" cy="80" r="78">
            <stop offset=".7" stopColor="#4ae44a" />
            <stop offset=".84" stopColor="#34c934" />
            <stop offset=".88" stopColor="#22d816" />
            <stop offset="1" stopColor="#34fa1e" />
          </radialGradient>
          <radialGradient id="ring-red" gradientUnits="userSpaceOnUse" cx="80" cy="80" r="78">
            <stop offset=".7" stopColor="#ee4848" />
            <stop offset=".86" stopColor="#cf3232" />
            <stop offset=".87" stopColor="#c63c12" />
            <stop offset="1" stopColor="#d4641c" />
          </radialGradient>
          <radialGradient id="ring-silver" gradientUnits="userSpaceOnUse" cx="80" cy="86" r="82">
            <stop offset=".66" stopColor="#fff" />
            <stop offset=".78" stopColor="#ededed" />
            <stop offset="1" stopColor="#c4c4c4" />
          </radialGradient>
          <linearGradient id="hole" x1="0" y1="0" x2="1" y2="1">
            <stop offset="0" stopColor="#fff" />
            <stop offset="1" stopColor="#f0f0f8" />
          </linearGradient>
        </defs>
        <circle cx="80" cy="80" r="79" fill="#fff" stroke="#adaeb4" />
        {slices.map(({ share, fill, edge }) => {
          const from = start;
          start += share;
          return (
            <g key={from}>
              <path d={arc(66, from, start)} stroke={fill} strokeWidth="23" />
              <path d={arc(77, from, start) + arc(55, from, start)} stroke={edge} />
            </g>
          );
        })}
        <circle cx="80" cy="80" r="53.500" fill="url(#hole)" stroke="#a6a7ae" />
      </svg>
      <div className="absolute inset-0 flex flex-col items-center justify-center pt-[2px] pr-[2px] text-center">{children}</div>
    </div>
  );
};

const GREEN_SWATCH = 'border-[#0b8e14] bg-linear-to-b from-[#52e652] to-[#22e80e]';
const BLACK_SWATCH = 'border-black bg-linear-to-b from-[#3c3c3c] to-[#1e3c08]';
const RED_SWATCH = 'border-[#a01010] bg-linear-to-b from-[#f04a4a] to-[#cc5512]';

const Legend = ({ swatch, children }: { swatch: string; children: ReactNode }) => (
  <div className="flex items-center gap-[6px] whitespace-nowrap">
    <span className={`h-4 w-4 border ${swatch}`} />
    {children}
  </div>
);

const GainBars = () => (
  <div className="grid grid-cols-[208px_21px_42px_21px_208px] items-start">
    <div className="pt-[67px] text-right text-[#0ba30f]">
      <p>
        Gain moyen des positions&nbsp;
        <br />
        gagnantes
      </p>
      <p className="text-[25px] leading-[30px]">53,24€</p>
    </div>
    <svg className="mt-[82px] h-[7px] w-[21px]" viewBox="0 0 21 7">
      <path d="M4 3.500H18" stroke="#0ba30f" />
      <path d="m16 1 4 2.500-4 2.500z" fill="#0ba30f" />
    </svg>
    <svg className="h-[156px] w-[42px]" viewBox="0 0 42 156">
      <defs>
        <linearGradient id="bar-green">
          <stop offset="0" stopColor="#5cf25c" />
          <stop offset=".48" stopColor="#2ecc2e" />
          <stop offset=".5" stopColor="#20dc10" />
          <stop offset="1" stopColor="#34fa1e" />
        </linearGradient>
        <linearGradient id="bar-red">
          <stop offset="0" stopColor="#ff5c5c" />
          <stop offset=".48" stopColor="#d23434" />
          <stop offset=".5" stopColor="#c43c10" />
          <stop offset="1" stopColor="#d8641c" />
        </linearGradient>
      </defs>
      <rect x=".5" y=".5" width="20" height="119" fill="#a4e2a6" stroke="#0ba30f" />
      <rect x=".5" y="85.500" width="20" height="34" fill="url(#bar-green)" stroke="#0ba30f" />
      <rect x="21.500" y="119.500" width="20" height="35" fill="#e4a2a4" stroke="#a80a0e" />
      <rect x="21.500" y="119.500" width="20" height="21" fill="url(#bar-red)" stroke="#a80a0e" />
    </svg>
    <svg className="mt-[137px] h-[7px] w-[21px]" viewBox="0 0 21 7">
      <path d="M3 3.500h14" stroke="#a80a0e" />
      <path d="M5 1 1 3.500 5 6z" fill="#a80a0e" />
    </svg>
    <div className="pt-[89px] whitespace-nowrap text-[#a80a0e]">
      <p>
        Perte moyenne des positions
        <br />
        perdantes
      </p>
      <p className="pt-[2px] text-[25px] leading-[30px]">-32,31€</p>
    </div>
  </div>
);

const DrawdownIcon = () => (
  <svg className="h-[84px] w-[141px] shrink-0" viewBox="0 0 141 84" fill="none">
    <defs>
      <linearGradient id="dd" x1="0" y1="0" x2="0" y2="1">
        <stop offset="0" stopColor="#f6e4e8" />
        <stop offset="1" stopColor="#efc6cb" />
      </linearGradient>
    </defs>
    <path d="M18 2l7 23 7-6 6 20 6-12 6 12 7 25 7-7 5-12 8-6 6-16 6 28 6 7 7 23H18z" fill="url(#dd)" />
    <path d="M10 1.500h131M10 82.500h131M138.500 4v76" stroke="#93a3aa" />
    <path d="m138.500 2 3 9h-6zm0 80 3-9h-6z" fill="#93a3aa" />
    <path d="m1 51 6-26L19 2m83 79 6-42 8-6 5-19 6 6" stroke="#93a3aa" strokeWidth="2" />
    <path d="m19 2 6 24 8-7 5 20 7-12 6 12 7 25 8-7 5-12 7-6 6-16 6 28 6 7 7 24" stroke="#e93232" strokeWidth="2.500" />
  </svg>
);

const RunupIcon = () => (
  <svg className="h-[84px] w-[141px] shrink-0" viewBox="0 0 141 84" fill="none">
    <defs>
      <linearGradient id="ru" x1="0" y1="0" x2="0" y2="1">
        <stop offset="0" stopColor="#eef4f0" />
        <stop offset="1" stopColor="#cde6d0" />
      </linearGradient>
    </defs>
    <path d="m19 82 6-25 7 7 6-20 7 11 6-11 6-26 7 8 4 12 8 6 6 17 6-28 6-8 8-23V82z" fill="url(#ru)" />
    <path d="M10 1.500h131M10 82.500h131M138.500 4v76" stroke="#93a3aa" />
    <path d="m138.500 2 3 9h-6zm0 80 3-9h-6z" fill="#93a3aa" />
    <path d="m1 32 6 26 12 23m83-79 5 42 8 6 6 19 6-6" stroke="#93a3aa" strokeWidth="2" />
    <path d="m19 82 6-25 8 7 5-20 7 12 6-12 6-26 7 8 5 12 7 6 6 16 6-28 6-7 7-23" stroke="#30b832" strokeWidth="2.500" />
  </svg>
);

const Clock = () => (
  <svg className="h-[90px] w-[90px] shrink-0" viewBox="0 0 90 90">
    <defs>
      <linearGradient id="dial" x1="0" y1="0" x2="0" y2="1">
        <stop offset="0" stopColor="#fff" />
        <stop offset="1" stopColor="#ccd6da" />
      </linearGradient>
    </defs>
    <circle cx="45" cy="45" r="41.500" fill="url(#dial)" stroke="#1a7cc4" strokeWidth="6" />
    <circle cx="45" cy="45" r="42" fill="none" stroke="#3a9ed8" strokeWidth="2.500" />
    {Array.from({ length: 12 }, (_, i) => (
      <path key={i} d={i % 3 ? 'M45 13v5' : 'M45 10v8'} stroke="#7faabf" strokeWidth="2" transform={`rotate(${i * 30} 45 45)`} />
    ))}
    <path d="M45 45 57 24M45 45l18 10" stroke="#3c3c3c" strokeWidth="3.500" />
    <circle cx="45" cy="45" r="4" fill="#fff" stroke="#3c3c3c" strokeWidth="2" />
  </svg>
);

const Summary = () => (
  <div className="min-w-0 flex-1 overflow-hidden">
    <div className="flex pt-5">
      <div className="h-[390px] w-[466px] shrink-0 border-r border-[#a6a7ae] pl-[13px]">
        <h2 className="pr-[7px] text-center text-[25px] leading-[30px]">
          Gain : <span className="text-[#0ba30f]">2 404,00€ (+240,4 %)</span>
        </h2>
        <div className="mt-[10px] flex items-center gap-5">
          <Donut slices={[{ share: 0.5638, ...WIN_SLICE }, { share: 0.01, ...FLAT_SLICE }, { share: 0.4262, ...LOSS_SLICE }]}>
            <p className="whitespace-nowrap text-[#0ba30f]">
              % de positions
              <br />
              gagnantes
            </p>
            <p className="mt-[2px] text-[25px] leading-[30px] whitespace-nowrap text-[#0ba30f]">56,38 %</p>
          </Donut>
          <div className="text-[25px] leading-[30px]">
            <p className="whitespace-nowrap">Nb de positions : 149</p>
            <Legend swatch={GREEN_SWATCH}>
              <span className="text-[#0ba30f]">Gagnantes : 84</span>
            </Legend>
            <Legend swatch={BLACK_SWATCH}>
              <span>Neutres : 1</span>
            </Legend>
            <Legend swatch={RED_SWATCH}>
              <span className="text-[#a80a0e]">Perdantes : 64</span>
            </Legend>
          </div>
        </div>
        <div className="mt-5 flex items-center gap-5">
          <Donut slices={[{ share: 0.684, ...WIN_SLICE }, { share: 0.316, ...LOSS_SLICE }]}>
            <p className="text-[#0ba30f]">
              Ratio
              <br />
              Gains/Pertes
            </p>
            <p className="mt-[2px] text-[25px] leading-[30px] text-[#0ba30f]">2,16</p>
          </Donut>
          <div className="flex flex-col gap-[5px] text-[25px] leading-[30px]">
            <div className="text-[#0ba30f]">
              <Legend swatch={GREEN_SWATCH}>Gain brut :</Legend>
              <p className="pl-[22px]">4 472,00€</p>
            </div>
            <div className="text-[#a80a0e]">
              <Legend swatch={RED_SWATCH}>Perte brute :</Legend>
              <p className="pl-[22px]">-2 068,00€</p>
            </div>
          </div>
        </div>
      </div>
      <div className="w-[500px] shrink-0">
        <h2 className="text-center text-[25px] leading-[30px]">
          Gain moyen : <span className="text-[#0ba30f]">16,13€ / trade</span>
        </h2>
        <div className="pt-[7px] pr-[22px] pb-[7px] text-center text-[#0ba30f]">
          <p>Plus gros gain</p>
          <p className="mt-[2px] text-[25px] leading-[30px]">187,00€</p>
        </div>
        <GainBars />
        <div className="pt-[5px] pl-[18px] text-center text-[#a80a0e]">
          <p>Plus grosse perte</p>
          <p className="mt-[2px] text-[25px] leading-[30px]">-55,00€</p>
        </div>
      </div>
    </div>
    <div className="mt-5 ml-5 flex h-[126px] items-center border-y border-[#a6a7ae] shadow-[0_1px_0_#fff]">
      <div className="flex w-[478px] shrink-0 items-center gap-[18px] pl-[57px]">
        <DrawdownIcon />
        <div className="whitespace-nowrap">
          <p className="text-[25px] leading-[30px]">Drawdown max :</p>
          <p className="text-[25px] leading-[30px] text-[#a80a0e]">278,00€</p>
          <p>Nb max pertes consécutives : 5</p>
        </div>
      </div>
      <div className="flex shrink-0 items-center gap-[18px] pl-[57px]">
        <RunupIcon />
        <div className="whitespace-nowrap">
          <p className="text-[25px] leading-[30px]">Runup max:</p>
          <p className="text-[25px] leading-[30px] text-[#0ba30f]">2 590,00€</p>
          <p>Nb max gains consécutifs : 6</p>
        </div>
      </div>
    </div>
    <div className="mt-[21px] ml-5 flex items-center">
      <div className="w-[356px]">
        <Donut
          slices={[
            { share: 0.0865, fill: '#dcdde9', edge: '#f2f2fa' },
            { share: 0.9135, fill: 'url(#ring-silver)', edge: '#f4f4f4' },
          ]}
        >
          <p>
            Temps dans le
            <br />
            marché
          </p>
          <p className="mt-[2px] text-[25px] leading-[30px] whitespace-nowrap">8,65 %</p>
        </Donut>
      </div>
      <Clock />
      <p className="pl-[19px] text-[25px] leading-[30px] whitespace-nowrap">
        Moy d&apos;ordres exécutés :
        <br />
        0,73 par jour
      </p>
    </div>
  </div>
);

const ScrollButton = ({ label, d }: { label: string; d: string }) => (
  <button
    type="button"
    aria-label={label}
    className="flex h-[15px] w-[15px] shrink-0 items-center justify-center rounded-sm border border-[#a6a7ae] bg-linear-to-b from-white to-[#e4e5ec]"
  >
    <svg className="h-2 w-2" viewBox="0 0 8 8">
      <path d={d} />
    </svg>
  </button>
);

const ReportWindow = () => (
  <div className="absolute top-[274px] right-0 bottom-0 left-[980px] flex flex-col border-t border-l border-[#a6a7ae] bg-[#e7e7f0] pl-[3px]">
    <div className="flex h-[25px] shrink-0 items-center border-b border-[#a6a7ae] bg-linear-to-b from-white to-[#eceef3]">
      <Logo />
      <span className="pl-px whitespace-nowrap">Rapport détaillé - Breakout 5min BrentCrude E1 - Pétrole - Brut Brent (Contrat 1€) (-)</span>
      <svg className="ml-auto h-4 w-10" viewBox="0 0 40 16" stroke="#a9aaae" strokeWidth="2" fill="none">
        <path d="M0 13h9M31 4l8 9m0-9-8 9M16 4.500h8v8h-8z" />
      </svg>
    </div>
    <div className="grid h-[52px] shrink-0 grid-cols-[272fr_333fr_322fr] border-b border-[#a6a7ae] bg-linear-to-b from-white to-[#e6e7ee] whitespace-nowrap">
      <div className="flex items-center justify-center font-bold">Pétrole - Brut Brent (Contrat 1€) (-)</div>
      <div className="flex items-center justify-center gap-[5px] border-x border-[#a6a7ae] pr-[5px]">
        <p className="text-center font-bold">
          Breakout 5min BrentCrude E1
          <br />5 minutes
        </p>
        <button type="button" className="h-[26px] w-[79px] rounded-[3px] border border-[#a9aab2] bg-linear-to-b from-white to-[#dedfe3]">
          Modifier
        </button>
      </div>
      <div className="flex items-center gap-2 pl-7">
        <div className="grid grid-cols-[auto_auto] gap-x-[5px] text-right">
          <span>Début :&nbsp;</span>
          <span>
            18 oct. 2015 23:00:00 <b>[1 000 €]</b>
          </span>
          <span>Actuel :</span>
          <span>
            12 déc. 2016 15:00:00 <b>[3 404 €]</b>
          </span>
        </div>
        <button type="button" aria-label="Imprimer">
          <svg className="h-[18px] w-[19px]" viewBox="0 0 19 18" fill="#fff" stroke="#111">
            <path d="M6 8 8 1h7l-2 7z" />
            <path d="M8.500 3h4m-5 2h4" />
            <path d="M1 9l3-2h12l2 2v5l-3 3H3l-2-2z" strokeWidth="1.300" />
            <path d="M1 10h15M2 13.500h12" strokeWidth="1.300" />
            <path d="M15.500 10v6l2.500-2V9z" fill="#555" />
          </svg>
        </button>
      </div>
    </div>
    <div className="flex h-8 shrink-0 items-end gap-px pl-[10px] whitespace-nowrap" role="tablist">
      <button
        type="button"
        role="tab"
        aria-selected="true"
        className="h-[21px] rounded-t-[3px] bg-linear-to-b from-[#cfd2e2] from-50% to-[#b0b4c8] to-50% px-[11px] text-white"
      >
        Résumé
      </button>
      {['Statistiques des positions clôturées', 'Liste des ordres', 'Liste des positions clôturées'].map((tab) => (
        <button
          key={tab}
          type="button"
          role="tab"
          className="h-[19px] rounded-t-[3px] border border-b-0 border-[#a9aab2] bg-linear-to-b from-white to-[#dcdde0] px-[11px]"
        >
          {tab}
        </button>
      ))}
    </div>
    <div className="mr-2 mb-[6px] ml-[10px] flex min-h-0 flex-1 flex-col border border-[#a6a7ae] bg-[#f2f3f7]">
      <div className="flex min-h-0 flex-1">
        <Summary />
        <div className="flex w-[16px] shrink-0 flex-col border-l border-[#a6a7ae] bg-[#eeeff4]">
          <ScrollButton label="Haut" d="M0 6h8L4 2z" />
          <div className="flex flex-1 flex-col items-center justify-center gap-px rounded-sm border border-[#a6a7ae] bg-linear-to-r from-white to-[#e8e9f0]">
            <i className="h-px w-[6px] bg-[#a6a7ae]" />
            <i className="h-px w-[6px] bg-[#a6a7ae]" />
            <i className="h-px w-[6px] bg-[#a6a7ae]" />
          </div>
          <div className="h-9" />
          <ScrollButton label="Bas" d="M0 2h8L4 6z" />
        </div>
      </div>
      <div className="flex h-[16px] shrink-0 border-t border-[#a6a7ae] bg-[#eeeff4] pr-[15px]">
        <ScrollButton label="Gauche" d="M6 0v8L2 4z" />
        <div className="flex flex-1 flex-col items-center justify-center gap-px rounded-sm border border-[#a6a7ae] bg-linear-to-b from-white to-[#e8e9f0]">
          <i className="h-px w-[6px] bg-[#a6a7ae]" />
          <i className="h-px w-[6px] bg-[#a6a7ae]" />
          <i className="h-px w-[6px] bg-[#a6a7ae]" />
        </div>
        <div className="w-[73px]" />
        <ScrollButton label="Droite" d="M2 0v8l4-4z" />
      </div>
    </div>
  </div>
);

export default function App() {
  return (
    <div className="relative flex h-screen flex-col overflow-hidden bg-[#f4f5f9] font-['Liberation_Sans',Arial,sans-serif] text-[13px] leading-[15px] text-black">
      <TitleBar />
      <Toolbar />
      <StatusBar />
      <EquityChart />
      <PositionsChart />
      <PriceChart />
      <TimeAxis />
      <footer className="h-[7px] shrink-0" />
      <ReportWindow />
    </div>
  );
}
